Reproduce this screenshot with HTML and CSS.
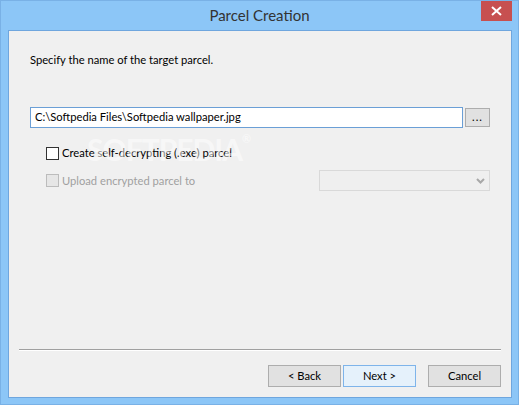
FILE: index.html
```html
<!DOCTYPE html>
<html>
	<head>
		<meta charset="utf-8">
		<title>Parcel Creation</title>
		<link rel="stylesheet" href="styles.css">
	</head>
	<body>
		<div class="window">
			<div class="titlebar">
				<span></span>
				<span class="title">Parcel Creation</span>
				<span class="close">
					<svg width="11" height="10" viewBox="0 0 11 10">
						<path d="M1 1 L10 9 M10 1 L1 9" stroke="#fff" stroke-width="2"/>
					</svg>
				</span>
			</div>
			<div class="client">
				<div class="content">
					<p class="intro">Specify the name of the target parcel.</p>
					<div class="path-row">
						<div class="path-input">C:\Softpedia Files\Softpedia wallpaper.jpg</div>
						<div class="browse">...</div>
					</div>
					<div class="options">
						<label class="check">
							<span class="box"></span>
							<span>Create self-decrypting (.exe) parcel</span>
						</label>
						<div class="upload-row">
							<label class="check disabled">
								<span class="box"></span>
								<span>Upload encrypted parcel to</span>
							</label>
							<div class="combo">
								<svg width="9" height="6" viewBox="0 0 9 6">
									<path d="M1 1 L4.5 4.5 L8 1" fill="none" stroke="#a8a8a8" stroke-width="2"/>
								</svg>
							</div>
						</div>
					</div>
					<div class="watermark">SOFTPEDIA<sup>®</sup></div>
				</div>
				<div class="separator"></div>
				<div class="buttons">
					<div class="btn">&lt; Back</div>
					<div class="btn default">Next &gt;</div>
					<div class="btn cancel">Cancel</div>
				</div>
			</div>
		</div>
	</body>
</html>
```

FILE: styles.css
```css
* {
	margin: 0;
	padding: 0;
	box-sizing: border-box;
}

body {
	font-family: Lato, "Noto Sans", sans-serif;
	font-size: 11.2px;
	color: #000;
	background: #8cc6f7;
}

.window {
	width: 519px;
	height: 405px;
	background: #8cc6f7;
	border: 1px solid #79b1e6;
	display: flex;
	flex-direction: column;
}

.titlebar {
	height: 29px;
	display: grid;
	grid-template-columns: 1fr auto 1fr;
	align-items: start;
}

.title {
	font-size: 15px;
	color: #333;
	line-height: 20px;
	margin-top: 4px;
}

.close {
	justify-self: end;
	width: 31px;
	height: 20px;
	margin-right: 6px;
	background: #c75050;
	display: flex;
	align-items: center;
	justify-content: center;
}

.client {
	margin: 0 6px 0 7px;
	height: 368px;
	background: #f0f0f0;
	border: 1px solid #6fa6de;
	display: flex;
	flex-direction: column;
}

.content {
	flex: 1;
	padding: 21px 0 0 21px;
	position: relative;
}

.intro {
	line-height: 16px;
}

.path-row {
	display: flex;
	align-items: flex-start;
	gap: 2px;
	margin-top: 39px;
}

.path-input {
	width: 433px;
	height: 21px;
	background: #fff;
	border: 1px solid #6b9fd6;
	padding-left: 4px;
	line-height: 18px;
}

.browse {
	width: 25px;
	height: 19px;
	margin-top: 1px;
	background: #e1e1e1;
	border: 1px solid #adadad;
	text-align: center;
	line-height: 16px;
	letter-spacing: 1px;
}

.options {
	padding-left: 16px;
	margin-top: 18px;
}

.check {
	display: flex;
	align-items: center;
	gap: 3px;
	height: 14px;
	line-height: 14px;
}

.check .box {
	width: 13px;
	height: 13px;
	background: #fff;
	border: 1px solid #333;
}

.check.disabled {
	color: #a0a0a0;
}

.check.disabled .box {
	background: #e6e6e6;
	border-color: #bcbcbc;
}

.upload-row {
	display: flex;
	align-items: center;
	margin-top: 10px;
}

.upload-row .check {
	width: 273px;
}

.combo {
	width: 171px;
	height: 21px;
	background: #efefef;
	border: 1px solid #d9d9d9;
	display: flex;
	align-items: center;
	justify-content: flex-end;
	padding-right: 4px;
}

.watermark {
	position: absolute;
	left: 78px;
	top: 100px;
	font-size: 30px;
	font-weight: bold;
	letter-spacing: -1px;
	color: rgba(255, 255, 255, 0.5);
	pointer-events: none;
}

.watermark sup {
	font-size: 11px;
	vertical-align: 18px;
}

.separator {
	margin: 0 10px;
	height: 2px;
	border-top: 1px solid #a0a0a0;
	border-bottom: 1px solid #fff;
}

.buttons {
	display: flex;
	justify-content: flex-end;
	gap: 2px;
	padding: 14px 10px 10px 0;
}

.btn {
	width: 73px;
	height: 22px;
	background: #e1e1e1;
	border: 1px solid #adadad;
	text-align: center;
	line-height: 20px;
}

.btn.default {
	background: #e5f1fb;
	border-color: #7eb4ea;
}

.btn.cancel {
	margin-left: 10px;
}
```
